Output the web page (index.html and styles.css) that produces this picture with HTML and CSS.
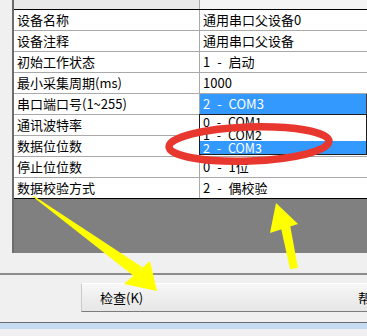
FILE: index.html
```html
<!DOCTYPE html>
<html>
<head>
<meta charset="utf-8">
<link rel="stylesheet" href="styles.css">
</head>
<body>
<div class="screen">
  <div class="panel">
    <div class="grid">
      <div class="row head"><div class="k"></div><div class="v"></div></div>
      <div class="row"><div class="k">设备名称</div><div class="v">通用串口父设备0</div></div>
      <div class="row"><div class="k">设备注释</div><div class="v">通用串口父设备</div></div>
      <div class="row"><div class="k">初始工作状态</div><div class="v">1 - 启动</div></div>
      <div class="row"><div class="k">最小采集周期(ms)</div><div class="v">1000</div></div>
      <div class="row"><div class="k">串口端口号(1~255)</div><div class="v combo-cell"><div class="combo">2 - COM3</div><ul class="droplist"><li>0 - COM1</li><li>1 - COM2</li><li class="sel">2 - COM3</li></ul></div></div>
      <div class="row"><div class="k">通讯波特率</div><div class="v">9600</div></div>
      <div class="row"><div class="k">数据位位数</div><div class="v">3 - 8位</div></div>
      <div class="row"><div class="k">停止位位数</div><div class="v">0 - 1位</div></div>
      <div class="row last"><div class="k">数据校验方式</div><div class="v">2 - 偶校验</div></div>
    </div>
  </div>
  <div class="gap"></div>
  <div class="toolbar">
    <div class="btn b1">检查(K)</div>
    <div class="btn b2">帮助(H)</div>
  </div>
  <div class="foot"><div class="band"></div></div>
  <svg class="marks" width="367" height="336" viewBox="0 0 367 336">
    <ellipse cx="249" cy="144" rx="80" ry="17" transform="rotate(-2 249 144)" fill="none" stroke="#e8372f" stroke-width="7.5"/>
    <polygon fill="#ffff00" points="32,196 34,196 142,267 135,277"/>
    <polygon fill="#ffff00" points="124,284 150,261 157,291"/>
    <polygon fill="#ffff00" points="281,228 290,225 298,268 290,269"/>
    <polygon fill="#ffff00" points="276,203 298,224 270,233"/>
  </svg>
</div>
</body>
</html>
```
FILE: styles.css
```css
html, body {
  margin: 0;
  padding: 0;
}
body {
  background: #f0f0f0;
  font-family: "Noto Sans CJK SC", "Noto Sans", sans-serif;
  font-size: 13px;
  color: #000;
}
.screen {
  position: relative;
  width: 367px;
  height: 336px;
  overflow: hidden;
  display: flex;
  flex-direction: column;
}
.panel {
  margin-left: 12px;
  border-left: 2px solid #6c6c6c;
  height: 253px;
  background: #808080;
  flex: none;
}
.grid {
  width: 353px;
  background: #fff;
}
.row {
  display: flex;
  height: 20px;
  line-height: 20px;
  border-bottom: 1px solid #a9a9a9;
  white-space: pre;
  word-spacing: 4px;
}
.row.head {
  height: 9px;
  line-height: 9px;
  border-bottom: 1px solid #000;
}
.row.head .k { background: #e9e9e9; }
.row.head .v { background: #f4f4f4; }
.row.last {
  border-bottom: 1px solid #000;
}
.k {
  width: 182px;
  padding-left: 3px;
  border-right: 1px solid #a9a9a9;
  flex: none;
}
.v {
  flex: 1;
  padding-left: 3px;
}
.combo-cell {
  position: relative;
  padding-left: 0;
}
.combo {
  width: 163px;
  height: 20px;
  padding-left: 3px;
  background: #3399ff;
  color: #fff;
  border-right: 1px solid #3c3c3c;
}
.droplist {
  position: absolute;
  left: -1px;
  top: 20px;
  width: 166px;
  margin: 0;
  padding: 0;
  list-style: none;
  border: 1px solid #1e1e1e;
  background: #fff;
  z-index: 2;
  white-space: normal;
  font-size: 12.5px;
}
.droplist li {
  display: block;
  height: 13px;
  line-height: 13px;
  padding-left: 3px;
  white-space: pre;
}
.droplist li.sel {
  background: #3399ff;
  color: #fff;
}
.gap {
  height: 20px;
  flex: none;
}
.toolbar {
  flex: none;
  border-top: 2px solid #8c8c8c;
  padding: 8px 0 0 81px;
  display: flex;
}
.btn {
  height: 27px;
  line-height: 27px;
  border-top: 1px solid #ffffff;
  border-bottom: 1px solid #7c7c7c;
  background: linear-gradient(#f7f7f7, #eeeeee 50%, #e6e6e6);
  white-space: nowrap;
  flex: none;
}
.b1 {
  width: 252px;
  padding-left: 18px;
  border-left: 1px solid #c9c9c9;
}
.b2 {
  width: 60px;
  padding-left: 6px;
}
.foot {
  flex: 1;
  padding-top: 10px;
}
.band {
  border-top: 1px solid #6e6e6e;
  height: 6px;
  background: #c6dbf2;
}
.marks {
  position: absolute;
  left: 0;
  top: 0;
  z-index: 5;
  pointer-events: none;
}
```
